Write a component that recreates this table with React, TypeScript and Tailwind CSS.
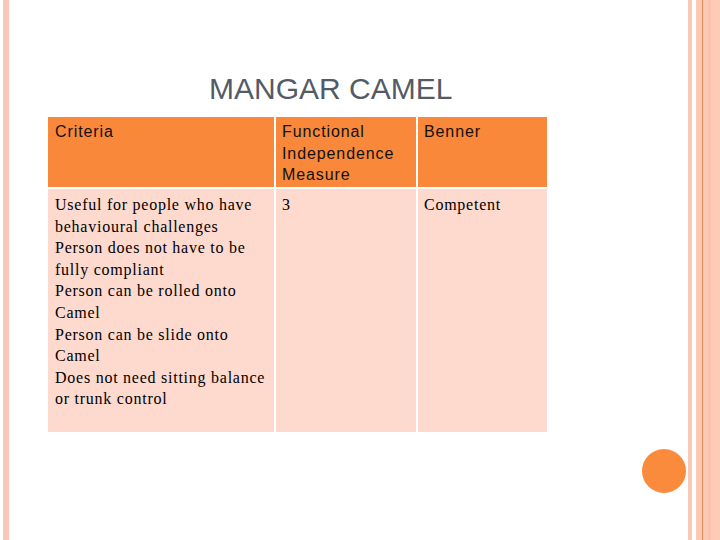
const criteria = [
  "Useful for people who have",
  "behavioural challenges",
  "Person does not have to be",
  "fully compliant",
  "Person can be rolled onto",
  "Camel",
  "Person can be slide onto",
  "Camel",
  "Does not need sitting balance",
  "or trunk control",
];

const sans = { fontFamily: '"Liberation Sans", Arial, sans-serif' };
const serif = { fontFamily: '"Liberation Serif", "Times New Roman", serif' };

export default function App() {
  return (
    <div className="w-[720px] h-[540px] bg-white flex overflow-hidden">
      {/* left rule */}
      <div className="ml-[3px] w-[6px] h-full bg-[#f9c8b4] shrink-0" />

      <div className="flex-1 flex flex-col">
        <h1
          className="pt-[74px] pl-[200px] text-[30px] leading-[30px] text-[#545b66] font-normal"
          style={sans}
        >
          MANGAR CAMEL
        </h1>

        <div className="mt-[13px] ml-[39px] w-[499px] grid grid-cols-[226px_140px_129px] grid-rows-[70px_243px] gap-[2px] text-[16px] leading-[21.6px] text-black whitespace-nowrap">
          <div className="bg-[#f9883a] pl-[7px] pt-[4px] tracking-[0.9px] text-[#111]" style={sans}>
            Criteria
          </div>
          <div className="bg-[#f9883a] pl-[6px] pt-[4px] tracking-[0.9px] text-[#111]" style={sans}>
            Functional
            <br />
            Independence
            <br />
            Measure
          </div>
          <div className="bg-[#f9883a] pl-[6px] pt-[4px] tracking-[0.9px] text-[#111]" style={sans}>
            Benner
          </div>

          <div className="bg-[#fdd9ce] pl-[7px] pt-[5px] tracking-[0.75px]" style={serif}>
            {criteria.map((line, i) => (
              <div key={i}>{line}</div>
            ))}
          </div>
          <div className="bg-[#fdd9ce] pl-[6px] pt-[5px] tracking-[0.75px]" style={serif}>
            3
          </div>
          <div className="bg-[#fdd9ce] pl-[6px] pt-[5px] tracking-[0.75px]" style={serif}>
            Competent
          </div>
        </div>

        <div className="flex-1 flex justify-end items-end pb-[47px] pr-[2px]">
          <div className="w-[44px] h-[44px] rounded-full bg-[#fb8b3c]" />
        </div>
      </div>

      {/* right rules */}
      <div className="flex h-full shrink-0">
        <div className="w-[4px] bg-[#f9c9b6]" />
        <div className="w-[4px] bg-white" />
        <div className="w-[6px] bg-[#fbc9b4]" />
        <div className="w-[1px] bg-[#ee8a52]" />
        <div className="w-[5px] bg-[#fbc9b4]" />
        <div className="w-[3px] bg-[#f9c0aa]" />
        <div className="w-[9px] bg-[#fdcbb6]" />
      </div>
    </div>
  );
}
